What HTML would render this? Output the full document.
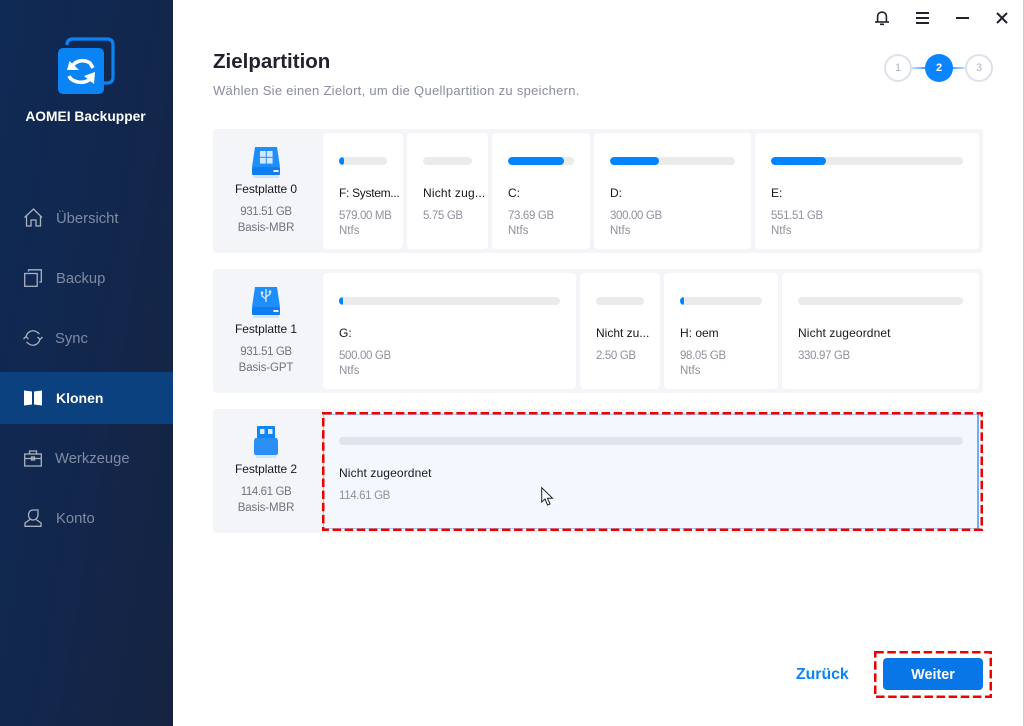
<!DOCTYPE html>
<html><head><meta charset="utf-8">
<style>
*{box-sizing:border-box;margin:0;padding:0}
html,body{width:1024px;height:726px;overflow:hidden;background:#fff;font-family:"Liberation Sans","Noto Sans CJK SC",sans-serif}
.a{position:absolute;white-space:nowrap}
#side{left:0;top:0;width:173px;height:726px;background:linear-gradient(100deg,#0f2a55 0%,#13264b 60%,#15233f 100%)}
.nav{left:56px;font-size:14.8px;color:#7f8ba3;line-height:22px;font-weight:500}
.g{left:213px;width:770px;height:124px;background:#f4f5f8;border-radius:4px}
.c{background:#fff;border-radius:4px;height:116px}
.b{height:8px;background:#ebebeb;border-radius:4px;overflow:hidden}
.b i{display:block;height:8px;background:#0084ff;border-radius:4px}
.n{font-size:12px;color:#16181f;line-height:16px}
.s{font-size:11.5px;color:#8f919c;line-height:18px;letter-spacing:-.35px}
.f{letter-spacing:0}
.d{font-size:12px;color:#16181f;line-height:16px;text-align:center;width:106px;left:213px;letter-spacing:-.05px}
.e{font-size:11.5px;color:#6f7480;line-height:17px;text-align:center;width:106px;left:213px;letter-spacing:-.1px}
.h{letter-spacing:-.4px}
svg{position:absolute;overflow:visible}
</style></head><body>
<div class="a" id="side"></div>
<svg style="left:57px;top:37px" width="58" height="58" viewBox="0 0 58 58">
<path d="M10 8 Q10 2 16 2 H50 Q56 2 56 8 V40 Q56 46 50 46 H47" fill="none" stroke="#0a84f5" stroke-width="3.2"/>
<rect x="1" y="11" width="46" height="46" rx="5" fill="#0a84f5"/>
<path d="M15 31 C16 25 25 21 33 26 L36 31" fill="none" stroke="#fff" stroke-width="3.6"/>
<path d="M10 33 L12.5 24 L22 33 Z" fill="#fff"/>
<path d="M12 39 C14 44 24 48 32 43 C35 41 36 39 36 37" fill="none" stroke="#fff" stroke-width="3.6"/>
<path d="M38 35 L37 47 L27 39 Z" fill="#fff"/>
</svg>
<div class="a" style="left:0;width:171px;top:108px;text-align:center;color:#fff;font-size:13.8px;font-weight:bold;line-height:18px">AOMEI Backupper</div>

<div class="a" style="left:0;top:372px;width:173px;height:52px;background:#0b417f"></div>
<div class="a nav" style="top:208px">Übersicht</div>
<div class="a nav" style="top:268px">Backup</div>
<div class="a nav" style="top:328px;left:55px">Sync</div>
<div class="a nav" style="top:387px;color:#fff;font-weight:bold;font-size:14px">Klonen</div>
<div class="a nav" style="top:448px;left:55px">Werkzeuge</div>
<div class="a nav" style="top:508px">Konto</div>

<svg style="left:24px;top:208px" width="19" height="19" viewBox="0 0 19 19" fill="none" stroke="#a9b1c0" stroke-width="1.3">
<path d="M.5 9.5 L9.5 1 L18 9.5"/><path d="M2.5 8 V18 H7 V12 H12 V18 H16.5 V8"/></svg>
<svg style="left:24px;top:269px" width="18" height="18" viewBox="0 0 18 18" fill="none" stroke="#a9b1c0" stroke-width="1.3">
<rect x=".7" y="4.5" width="12.5" height="12.8"/><path d="M4.5 2.5 V.8 H17.3 V13 H15.3"/></svg>
<svg style="left:23px;top:329px" width="20" height="18" viewBox="0 0 20 18" fill="none" stroke="#a9b1c0" stroke-width="1.3">
<path d="M3 8 C4 3 9 0 14 3 L16.5 5"/><path d="M17 10 C16 15 11 18 6 15 L3.5 13"/><path d="M.5 10 L3 7.5 L5.5 10"/><path d="M14.5 8 L17 10.5 L19.5 8"/></svg>
<svg style="left:24px;top:390px" width="18" height="16" viewBox="0 0 18 16" fill="#fff">
<path d="M0 .5 L8 1.5 V14.5 L0 15.5 Z"/><path d="M10 1.5 L18 .5 V15.5 L10 14.5 Z"/></svg>
<svg style="left:24px;top:450px" width="18" height="17" viewBox="0 0 18 17" fill="none" stroke="#a9b1c0" stroke-width="1.3">
<rect x=".7" y="4" width="16.6" height="12"/><path d="M5.5 4 V1 H12.5 V4"/><path d="M.7 8.5 H17.3"/><rect x="7.5" y="7" width="3" height="3"/></svg>
<svg style="left:24px;top:509px" width="18" height="18" viewBox="0 0 18 18" fill="none" stroke="#a9b1c0" stroke-width="1.3">
<path d="M14 1 H9 C5.5 1 4.5 4 4.5 6 C4.5 9 6.5 11 9 11 C12 11 14 8.5 14 5.5 Z"/><path d="M6 10.5 L1 14 V17.3 H17 V14 L12 10.5"/></svg>

<!-- window controls -->
<svg style="left:875px;top:10px" width="14" height="15" viewBox="0 0 14 15" fill="none" stroke="#20222e" stroke-width="1.6">
<path d="M2.6 11.5 V6.5 C2.6 .6 11.4 .6 11.4 6.5 V11.5"/><path d="M0 12 H14"/><path d="M5 14.3 H9"/></svg>
<div class="a" style="left:916px;top:12px;width:13px;height:2px;background:#20222e"></div>
<div class="a" style="left:916px;top:17px;width:13px;height:2px;background:#20222e"></div>
<div class="a" style="left:916px;top:22px;width:13px;height:2px;background:#20222e"></div>
<div class="a" style="left:956px;top:17px;width:13px;height:2px;background:#20222e"></div>
<svg style="left:996px;top:12px" width="12" height="12" viewBox="0 0 12 12" stroke="#20222e" stroke-width="2"><path d="M1 1 L11 11 M11 1 L1 11"/></svg>
<div class="a" style="left:1023px;top:0;width:1px;height:726px;background:#c9ccd2"></div>

<div class="a" style="left:213px;top:49px;font-size:20.5px;font-weight:bold;color:#20222e;line-height:25px">Zielpartition</div>
<div class="a" style="left:213px;top:82px;font-size:13px;color:#8a8e9c;line-height:17px;letter-spacing:.29px">Wählen Sie einen Zielort, um die Quellpartition zu speichern.</div>

<!-- steps -->
<div class="a" style="left:910px;top:67px;width:16px;height:2px;background:linear-gradient(90deg,#d6eaff,#3d9dff)"></div>
<div class="a" style="left:951px;top:67px;width:16px;height:2px;background:linear-gradient(90deg,#3d9dff,#d6eaff)"></div>
<div class="a" style="left:884px;top:54px;width:28px;height:28px;border:2px solid #dde3ea;border-radius:50%;text-align:center;font-size:11px;line-height:24px;color:#b0b4bc;background:#fff">1</div>
<div class="a" style="left:925px;top:54px;width:28px;height:28px;border-radius:50%;text-align:center;font-size:11px;line-height:28px;color:#fff;font-weight:bold;background:#0a84ff">2</div>
<div class="a" style="left:965px;top:54px;width:28px;height:28px;border:2px solid #dde3ea;border-radius:50%;text-align:center;font-size:11px;line-height:24px;color:#b0b4bc;background:#fff">3</div>

<!-- groups -->
<div class="a g" style="top:129px"></div>
<div class="a g" style="top:269px"></div>
<div class="a g" style="top:409px"></div>

<!-- disk icons -->
<svg style="left:252px;top:147px" width="28" height="32" viewBox="0 0 28 32">
<path d="M3 0 H25 L28 20 H0 Z" fill="#1e8efc"/><rect x="0" y="20" width="28" height="8" rx="1" fill="#0f7cf0"/><rect x="21.5" y="23" width="5" height="2" fill="#fff"/>
<rect x="1" y="28" width="26" height="3" fill="#cfe4fb"/>
<rect x="8" y="4" width="5.8" height="5.8" fill="#d4e8ff"/><rect x="14.8" y="4" width="5.8" height="5.8" fill="#d4e8ff"/><rect x="8" y="10.8" width="5.8" height="5.8" fill="#d4e8ff"/><rect x="14.8" y="10.8" width="5.8" height="5.8" fill="#d4e8ff"/></svg>
<svg style="left:252px;top:287px" width="28" height="32" viewBox="0 0 28 32">
<path d="M3 0 H25 L28 20 H0 Z" fill="#1e8efc"/><rect x="0" y="20" width="28" height="8" rx="1" fill="#0f7cf0"/><rect x="21.5" y="23" width="5" height="2" fill="#fff"/>
<rect x="1" y="28" width="26" height="3" fill="#cfe4fb"/>
<path d="M14 2 V15 M14 12 L10 9 V6 M14 10 L18 7 V5" stroke="#d4e8ff" stroke-width="1.4" fill="none"/><rect x="8.8" y="4.5" width="2.4" height="2.4" fill="#d4e8ff"/><rect x="16.8" y="3.5" width="2.4" height="2.4" fill="#d4e8ff"/></svg>
<svg style="left:254px;top:426px" width="24" height="33" viewBox="0 0 24 33">
<rect x="3" y="0" width="18" height="13" rx="1" fill="#0f86f5"/><rect x="6" y="3" width="4.5" height="5" rx=".5" fill="#dcecff"/><rect x="14" y="3" width="4.5" height="5" rx=".5" fill="#dcecff"/>
<path d="M1 12 H23 L24 15 V27 Q24 29 22 29 H2 Q0 29 0 27 V15 Z" fill="#2b8ff5"/><rect x="2" y="29" width="20" height="3" fill="#cfe4fb"/></svg>

<div class="a d" style="top:181px">Festplatte 0</div>
<div class="a e h" style="top:204px">931.51 GB</div>
<div class="a e" style="top:220px">Basis-MBR</div>
<div class="a d" style="top:321px">Festplatte 1</div>
<div class="a e h" style="top:344px">931.51 GB</div>
<div class="a e" style="top:360px">Basis-GPT</div>
<div class="a d" style="top:461px">Festplatte 2</div>
<div class="a e h" style="top:484px">114.61 GB</div>
<div class="a e" style="top:500px">Basis-MBR</div>

<!-- row 1 -->
<div class="a c" style="left:323px;top:133px;width:80px"></div>
<div class="a b" style="left:339px;top:157px;width:48px"><i style="width:5px"></i></div>
<div class="a n" style="left:339px;top:185px;letter-spacing:-.3px">F: System...</div>
<div class="a s" style="left:339px;top:207px">579.00 MB</div>
<div class="a s f" style="left:339px;top:222px">Ntfs</div>

<div class="a c" style="left:407px;top:133px;width:81px"></div>
<div class="a b" style="left:423px;top:157px;width:49px"></div>
<div class="a n" style="left:423px;top:185px;letter-spacing:.2px">Nicht zug...</div>
<div class="a s" style="left:423px;top:207px">5.75 GB</div>

<div class="a c" style="left:492px;top:133px;width:98px"></div>
<div class="a b" style="left:508px;top:157px;width:66px"><i style="width:56px"></i></div>
<div class="a n" style="left:508px;top:185px">C:</div>
<div class="a s" style="left:508px;top:207px">73.69 GB</div>
<div class="a s f" style="left:508px;top:222px">Ntfs</div>

<div class="a c" style="left:594px;top:133px;width:157px"></div>
<div class="a b" style="left:610px;top:157px;width:125px"><i style="width:49px"></i></div>
<div class="a n" style="left:610px;top:185px">D:</div>
<div class="a s" style="left:610px;top:207px">300.00 GB</div>
<div class="a s f" style="left:610px;top:222px">Ntfs</div>

<div class="a c" style="left:755px;top:133px;width:224px"></div>
<div class="a b" style="left:771px;top:157px;width:192px"><i style="width:55px"></i></div>
<div class="a n" style="left:771px;top:185px">E:</div>
<div class="a s" style="left:771px;top:207px">551.51 GB</div>
<div class="a s f" style="left:771px;top:222px">Ntfs</div>

<!-- row 2 -->
<div class="a c" style="left:323px;top:273px;width:253px"></div>
<div class="a b" style="left:339px;top:297px;width:221px"><i style="width:4px"></i></div>
<div class="a n" style="left:339px;top:325px">G:</div>
<div class="a s" style="left:339px;top:347px">500.00 GB</div>
<div class="a s f" style="left:339px;top:362px">Ntfs</div>

<div class="a c" style="left:580px;top:273px;width:80px"></div>
<div class="a b" style="left:596px;top:297px;width:48px"></div>
<div class="a n" style="left:596px;top:325px">Nicht zu...</div>
<div class="a s" style="left:596px;top:347px">2.50 GB</div>

<div class="a c" style="left:664px;top:273px;width:114px"></div>
<div class="a b" style="left:680px;top:297px;width:82px"><i style="width:4px"></i></div>
<div class="a n" style="left:680px;top:325px">H: oem</div>
<div class="a s" style="left:680px;top:347px">98.05 GB</div>
<div class="a s f" style="left:680px;top:362px">Ntfs</div>

<div class="a c" style="left:782px;top:273px;width:197px"></div>
<div class="a b" style="left:798px;top:297px;width:165px"></div>
<div class="a n" style="left:798px;top:325px;letter-spacing:.12px">Nicht zugeordnet</div>
<div class="a s" style="left:798px;top:347px">330.97 GB</div>

<!-- row 3 -->
<div class="a" style="left:323px;top:414px;width:656px;height:115px;background:#f2f8fe;border:1px solid #a9cdf5;border-right:2px solid #6fb0f5"></div>
<div class="a b" style="left:339px;top:437px;width:624px;background:#e0e4ec"></div>
<div class="a n" style="left:339px;top:465px;letter-spacing:.12px">Nicht zugeordnet</div>
<div class="a s" style="left:339px;top:487px">114.61 GB</div>
<svg style="left:322px;top:412px" width="661" height="119" viewBox="0 0 661 119"><rect x="1.25" y="1.25" width="658.5" height="116.5" fill="none" stroke="#f00000" stroke-width="2.5" stroke-dasharray="8.5 3.6"/></svg>
<svg style="left:541px;top:487px" width="13" height="19" viewBox="0 0 13 19"><path d="M.7 .7 V15 L4 12 L6.5 18 L9 17 L6.5 11.3 H11.5 Z" fill="#fff" stroke="#222" stroke-width="1"/></svg>

<!-- footer -->
<div class="a" style="left:796px;top:665px;font-size:15.8px;font-weight:bold;color:#0a84f5;line-height:20px">Zurück</div>
<div class="a" style="left:883px;top:658px;width:100px;height:32px;background:#0876e6;border-radius:4px;color:#fff;font-size:14.4px;font-weight:bold;text-align:center;line-height:35px">Weiter</div>
<svg style="left:874px;top:651px" width="118" height="47" viewBox="0 0 118 47"><rect x="1.25" y="1.25" width="115.5" height="44.5" fill="none" stroke="#f00000" stroke-width="2.5" stroke-dasharray="8.5 3.6"/></svg>
</body></html>
